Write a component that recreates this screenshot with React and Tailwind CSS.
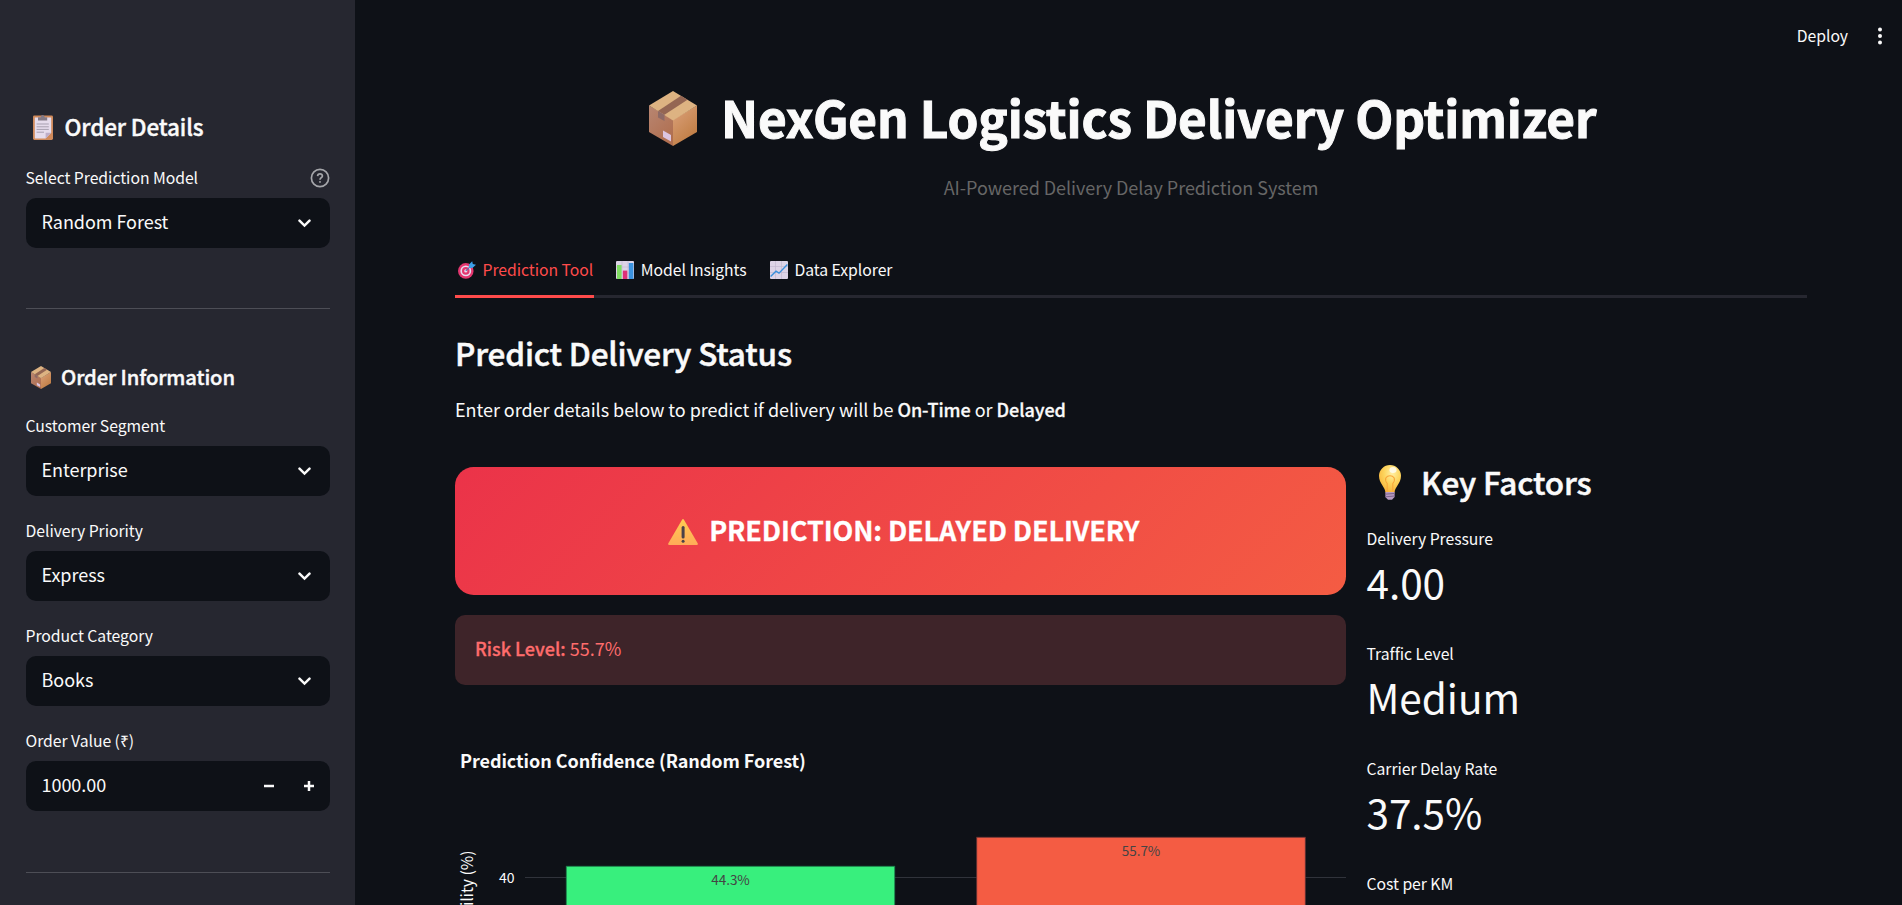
import React from "react";

function BoxIcon({ className }) {
  return (
    <svg viewBox="0 0 48 55" preserveAspectRatio="none" className={className}>
      <defs>
        <linearGradient id="boxRight" x1="0.2" y1="0" x2="0.8" y2="1">
          <stop offset="0" stopColor="#d99f78" />
          <stop offset="1" stopColor="#bd793d" />
        </linearGradient>
        <linearGradient id="boxLeft" x1="0" y1="0" x2="0.6" y2="1">
          <stop offset="0" stopColor="#b88672" />
          <stop offset="1" stopColor="#b06f50" />
        </linearGradient>
      </defs>
      <path d="M0 14.5 24 28.5V55L0 41Z" fill="url(#boxLeft)" />
      <path d="M48 14.5 24 28.5V55L48 41Z" fill="url(#boxRight)" />
      <path d="M24 0 48 14.5 24 29.5 0 14.5Z" fill="#ddb382" />
      <path d="M32 4.8 38.5 8.8 15.5 23.8 9 20Z" fill="#946653" />
      <path d="M9 20 15.5 23.8V30L9 26.5Z" fill="#8d6a66" />
      <path d="M14 39.5 22 44V50.5L14 46Z" fill="#dcc5e0" />
    </svg>
  );
}

function ClipboardIcon({ className }) {
  return (
    <svg viewBox="0 0 20 25" className={className}>
      <rect x="0" y="0.6" width="20" height="24.4" rx="1.4" fill="#d08a5b" />
      <path d="M1.8 2.6H18.2V17.8L12.6 23.4H1.8Z" fill="#e6dcec" />
      <path d="M18.2 17.8H12.6V23.4Z" fill="#bfaec9" />
      <path d="M5 2.2H7.6Q8 0 9.6 0T11.8 2.2H14.2V5.6H5Z" fill="#847a86" />
      <path d="M3.6 9H15.8M3.6 11.8H15.8M3.6 14.4H15.8M3.6 17.2H11" stroke="#a79fb0" strokeWidth="1" />
    </svg>
  );
}

function TargetIcon({ className }) {
  return (
    <svg viewBox="0 0 18 18" className={className}>
      <circle cx="7.8" cy="9.9" r="7.8" fill="#e4366f" />
      <circle cx="7.8" cy="9.9" r="5.4" fill="#e9dcef" />
      <circle cx="7.8" cy="9.9" r="3.8" fill="#e4366f" />
      <circle cx="7.8" cy="9.9" r="1.6" fill="#efd9ea" />
      <path d="M7.8 9.9 13.6 4.4" stroke="#5b6fb0" strokeWidth="1.2" />
      <path d="M11 6.8V3.6L14.2 0.2 14.8 3 18 3.7 14.4 6.9Z" fill="#3ba0ea" />
    </svg>
  );
}

function BarsIcon({ className }) {
  return (
    <svg viewBox="0 0 18 18" className={className}>
      <rect width="18" height="18" rx="1" fill="#ddd3e6" />
      <path d="M0 6H18M0 12H18M6 0V18M12 0V18" stroke="#c3b7d0" strokeWidth="0.6" />
      <rect x="1" y="4" width="4.6" height="14" fill="#7fdc62" />
      <rect x="6.9" y="9.6" width="4.4" height="8.4" fill="#dd2f78" />
      <rect x="12.8" y="2" width="4.6" height="16" fill="#3b93e0" />
    </svg>
  );
}

function TrendIcon({ className }) {
  return (
    <svg viewBox="0 0 18 18" className={className}>
      <rect width="18" height="18" rx="1" fill="#ddd3e6" />
      <path d="M0 5.5H18M0 11.5H18M5.5 0V18M11.5 0V18" stroke="#c3b7d0" strokeWidth="0.7" />
      <path d="M0.6 15.4 6 10.2 9 12.2 17.4 3.4" fill="none" stroke="#3a8fdb" strokeWidth="1.4" />
    </svg>
  );
}

function BulbIcon({ className }) {
  return (
    <svg viewBox="0 0 22 35" className={className}>
      <defs>
        <radialGradient id="bulb" cx="0.6" cy="0.3" r="0.75">
          <stop offset="0" stopColor="#fff0a6" />
          <stop offset="0.5" stopColor="#fdd45c" />
          <stop offset="1" stopColor="#f8b036" />
        </radialGradient>
      </defs>
      <path d="M6.4 27.5C6.4 22.5 0 18.5 0 10.8A11 10.8 0 0 1 22 10.8C22 18.5 15.6 22.5 15.6 27.5Z" fill="url(#bulb)" />
      <path d="M8.2 26.5V18.5Q5.8 15.8 6.8 13Q8.2 10.8 11 10.8T15.2 13Q16.2 15.8 13.8 18.5V26.5" fill="none" stroke="#f9a63a" strokeWidth="1.1" />
      <ellipse cx="14" cy="5" rx="3.6" ry="3" fill="#fff" opacity="0.75" />
      <path d="M6.4 27H15.6V32L13 34.7H9L6.4 32Z" fill="#b79ac0" />
      <path d="M6 29.2 16 28.4M6.2 31.8 15.6 31" stroke="#7d648e" strokeWidth="1" />
    </svg>
  );
}

function WarningIcon({ className }) {
  return (
    <svg viewBox="0 0 30 26" className={className}>
      <defs>
        <linearGradient id="warn" x1="0" y1="0" x2="0" y2="1">
          <stop offset="0" stopColor="#ffcb52" />
          <stop offset="1" stopColor="#ffab58" />
        </linearGradient>
      </defs>
      <path d="M14.2 0.6Q15 -0.4 15.8 0.6L29.8 24.6Q30 26 29 26H1Q0 26 0.2 24.6Z" fill="url(#warn)" />
      <rect x="13.6" y="7" width="3" height="12.5" rx="1.5" fill="#4a4148" />
      <circle cx="15.1" cy="22.3" r="1.5" fill="#4a4148" />
    </svg>
  );
}

function Chevron() {
  return (
    <svg viewBox="0 0 13 9" className="mr-px h-[9px] w-[13px]">
      <path d="M1.5 1.7 6.5 6.6 11.5 1.7" fill="none" stroke="#fafafa" strokeWidth="2.5" strokeLinecap="round" />
    </svg>
  );
}

function Label({ children }) {
  return <div className="h-6 text-[15.75px] leading-[26px] whitespace-nowrap">{children}</div>;
}

function Select({ label, value }) {
  return (
    <div>
      <div className="-ml-[0.5px]">
        <Label>{label}</Label>
      </div>
      <div className="mt-[9px] flex h-[50px] items-center justify-between rounded-[10px] bg-[#0e1117] pr-[18.5px] pl-[15.5px]">
        <span className="pb-1 text-[18px]">{value}</span>
        <Chevron />
      </div>
    </div>
  );
}

function Metric({ label, value }) {
  return (
    <div className="h-[115px] shrink-0">
      <Label>{label}</Label>
      <div className="mt-1 text-[40.5px] leading-[56px]">{value}</div>
    </div>
  );
}

function Sidebar() {
  return (
    <aside className="flex w-[355px] shrink-0 flex-col bg-[#262730] pt-[111px] pr-[25px] pl-[26px]">
      <h2 className="flex h-[30px] items-center pl-[7px] text-[22.5px] leading-[30px] font-medium tracking-[-0.13px] [-webkit-text-stroke:0.4px]">
        <ClipboardIcon className="mt-0.5 mr-[11.5px] h-[25px] w-5" />
        Order Details
      </h2>
      <div className="relative mt-6">
        <Select label="Select Prediction Model" value="Random Forest" />
        <svg viewBox="0 0 20 20" className="absolute top-[3px] right-0 h-5 w-5" fill="none" stroke="#a5a6aa" strokeWidth="1.7">
          <circle cx="10" cy="10" r="8.6" />
          <path d="M7.6 8.1Q7.7 5.8 10 5.8T12.4 7.9C12.4 9.5 10 9.7 10 11.7" />
          <circle cx="10" cy="13.9" r="0.6" fill="#a5a6aa" strokeWidth="0.8" />
        </svg>
      </div>
      <hr className="mt-[60px] border-t border-[#4d4e56]" />
      <h3 className="mt-[54px] flex h-7 items-center pl-[5px] text-[20.25px] leading-7 font-medium tracking-[-0.13px] [-webkit-text-stroke:0.4px]">
        <BoxIcon className="mr-[10px] h-[23px] w-5" />
        Order Information
      </h3>
      <div className="mt-[22px] flex flex-col gap-[22px]">
        <Select label="Customer Segment" value="Enterprise" />
        <Select label="Delivery Priority" value="Express" />
        <Select label="Product Category" value="Books" />
        <div>
          <div className="-ml-[0.5px]">
            <Label>Order Value (₹)</Label>
          </div>
          <div className="mt-[9px] flex h-[50px] items-center justify-between rounded-[10px] bg-[#0e1117] pr-4 pl-[15.5px]">
            <span className="pb-1 text-[18px]">1000.00</span>
            <span className="flex items-center gap-[30px]">
              <svg viewBox="0 0 10 10" className="h-2.5 w-2.5"><path d="M0 5H10" stroke="#fafafa" strokeWidth="2.5" /></svg>
              <svg viewBox="0 0 10 10" className="h-2.5 w-2.5"><path d="M0 5H10M5 0V10" stroke="#fafafa" strokeWidth="2.5" /></svg>
            </span>
          </div>
        </div>
      </div>
      <hr className="mt-[61px] border-t border-[#4d4e56]" />
    </aside>
  );
}

function Chart() {
  return (
    <svg viewBox="0 0 891 180" className="mt-10 h-[180px] w-[891px] shrink-0" fill="#fafafa">
      <text x="5" y="43" className="text-[18px] font-bold tracking-[-0.06px]">Prediction Confidence (Random Forest)</text>
      <rect x="70" y="152" width="821" height="1" fill="#30333b" />
      <rect x="111.25" y="141.25" width="328.5" height="50" fill="#38ef7d" stroke="#1d7a4a" strokeWidth="0.8" />
      <rect x="521.75" y="112.25" width="328.5" height="80" fill="#f45c43" stroke="#6b3436" strokeWidth="0.8" />
      <text x="59.5" y="158" textAnchor="end" className="text-[14px]">40</text>
      <text x="275.5" y="160" textAnchor="middle" fill="#444444" className="text-[13.5px]">44.3%</text>
      <text x="686" y="131" textAnchor="middle" fill="#444444" className="text-[13.5px]">55.7%</text>
      <text transform="translate(18 125.5) rotate(-90)" textAnchor="end" className="text-[15.75px]">Probability (%)</text>
    </svg>
  );
}

export default function App() {
  return (
    <div className="relative flex h-[905px] w-full overflow-hidden bg-[#0e1117] tracking-[-0.04px] text-[#fafafa] [font-family:'Noto_Sans_CJK_SC',sans-serif]">
      <Sidebar />
      <main className="flex min-w-0 flex-1 flex-col pt-[87px] pr-[95px] pl-[100px]">
        <h1 className="flex h-[60px] items-center justify-center pr-[17px] text-[49.5px] leading-[60px] font-bold tracking-[-0.13px] whitespace-nowrap [-webkit-text-stroke:1px]">
          <BoxIcon className="mt-0.5 mr-[24.5px] h-[55px] w-12" />
          NexGen Logistics Delivery Optimizer
        </h1>
        <p className="mt-[25px] text-center text-[18px] leading-[30px] text-[#666666]">
          AI-Powered Delivery Delay Prediction System
        </p>
        <nav className="mt-[55px] flex h-[41px] gap-5 border-b-[3px] border-[#262730] text-[15.75px] leading-[26px]">
          <div className="flex h-[41px] w-[139px] gap-[6.5px] border-b-[3px] border-[#ff4b4b] pl-[3px] whitespace-nowrap text-[#ff4b4b]">
            <TargetIcon className="mt-1 h-[18px] w-[18px] shrink-0" />
            Prediction Tool
          </div>
          <div className="flex gap-[6.5px] pl-[2.3px]">
            <BarsIcon className="mt-1 h-[18px] w-[18px]" />
            Model Insights
          </div>
          <div className="flex gap-[6.5px] pl-[3.3px]">
            <TrendIcon className="mt-1 h-[18px] w-[18px]" />
            Data Explorer
          </div>
        </nav>
        <h2 className="mt-[33px] text-[31.5px] leading-[42px] font-medium tracking-[-0.17px] [-webkit-text-stroke:0.5px]">Predict Delivery Status</h2>
        <p className="mt-[21px] text-[18px] leading-[30px]">
          Enter order details below to predict if delivery will be{" "}
          <strong className="font-medium [-webkit-text-stroke:0.3px]">On-Time</strong> or{" "}
          <strong className="font-medium [-webkit-text-stroke:0.3px]">Delayed</strong>
        </p>
        <div className="mt-[43px] flex min-h-0 flex-1 gap-5">
          <section className="flex w-[891px] shrink-0 flex-col">
            <div className="flex h-[128px] shrink-0 items-center justify-center rounded-[18.75px] bg-[linear-gradient(135deg,#eb3349_0%,#f45c43_100%)] pl-[6px] text-white">
              <WarningIcon className="mt-0.5 mr-[11.5px] h-[26px] w-[30px]" />
              <span className="pb-0.5 text-[27px] leading-[34px] font-bold tracking-[-0.12px] [-webkit-text-stroke:0.3px]">PREDICTION: DELAYED DELIVERY</span>
            </div>
            <div className="mt-5 flex h-[70px] shrink-0 items-center rounded-[10px] bg-[#3e2429] pb-1 pl-5 text-[18px] tracking-normal text-[#ff6c6c]">
              <span><strong className="font-medium [-webkit-text-stroke:0.3px]">Risk Level:</strong> 55.7%</span>
            </div>
            <Chart />
          </section>
          <section className="flex flex-1 flex-col">
            <h2 className="-mt-[7px] flex h-[42px] shrink-0 items-center pl-[13px] text-[31.5px] leading-[42px] font-medium tracking-[-0.17px] [-webkit-text-stroke:0.5px]">
              <BulbIcon className="mt-0.5 mr-[20px] h-[35px] w-[22px]" />
              Key Factors
            </h2>
            <div className="mt-6 flex flex-col pl-[0.5px]">
              <Metric label="Delivery Pressure" value="4.00" />
              <Metric label="Traffic Level" value="Medium" />
              <Metric label="Carrier Delay Rate" value="37.5%" />
              <Label>Cost per KM</Label>
            </div>
          </section>
        </div>
      </main>
      <header className="absolute top-6 right-5 flex items-center gap-[30px] text-[15.75px] leading-6">
        <span>Deploy</span>
        <svg viewBox="0 0 4 18" className="h-[18px] w-1" fill="#fafafa">
          <circle cx="2" cy="2.5" r="2" />
          <circle cx="2" cy="9" r="2" />
          <circle cx="2" cy="15.5" r="2" />
        </svg>
      </header>
    </div>
  );
}
